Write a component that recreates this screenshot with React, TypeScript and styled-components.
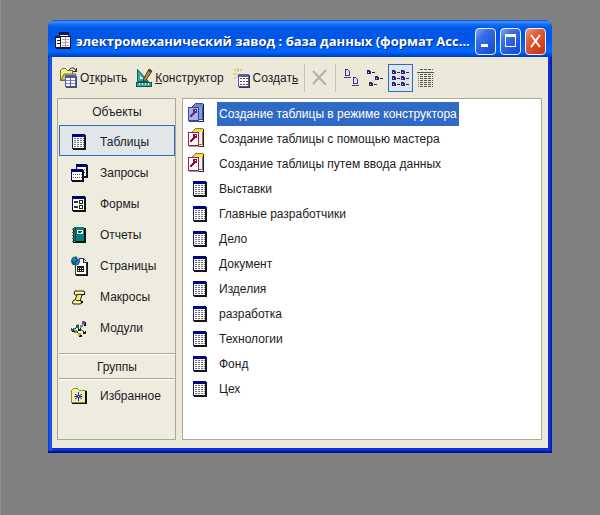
import React from "react";
import styled, { createGlobalStyle, css } from "styled-components";

const ui = `"Liberation Sans", Arial, sans-serif`;

const GlobalStyle = createGlobalStyle`
  * { box-sizing: border-box; }
  body { margin: 0; background: #808080; }
  button { font: inherit; color: inherit; cursor: default; }
  svg { display: block; flex: none; }
`;

const Desktop = styled.div`
  min-height: 100vh;
  display: flex;
  padding: 20px 48px 62px 47px;
  border-left: 1px solid #8c8f84;
  background: #808080;
  font: 12px/16px ${ui};
  color: #1c1c24;
`;

const Window = styled.main`
  flex: 1;
  min-width: 0;
  display: flex;
  flex-direction: column;
  border-radius: 8px 8px 0 0;
  background: linear-gradient(90deg, #0831d9 0, #1668f0 3px, #0831d9 4px, #0831d9 calc(100% - 2px), #001a90 100%);
  padding: 0 4px 5px;
  box-shadow: inset 0 -2px 0 #001690;
`;

const TitleBar = styled.header`
  height: 37px;
  margin: 0 -4px;
  padding: 5px 6px 0 7px;
  display: flex;
  align-items: center;
  border-radius: 8px 8px 0 0;
  background: linear-gradient(180deg, #0a4fd0 0, #3f94ff 2px, #1470f4 4px, #0058e6 8px, #0055e5 18px, #0064fa 26px, #0066ff 32px, #0050dc 34px, #003cc4 37px);
`;

const Title = styled.h1`
  flex: 1;
  min-width: 0;
  margin: 0 0 0 5px;
  font: 700 13px/20px "Open Sans", "Noto Sans", sans-serif;
  color: #fff;
  text-shadow: 1px 1px 1px #0a2a80;
  white-space: nowrap;
  overflow: hidden;
`;

const Controls = styled.div`
  display: flex;
  gap: 4px;
`;

const ControlButton = styled.button<{ $close?: boolean }>`
  width: 21px;
  height: 27px;
  padding: 0;
  display: flex;
  align-items: center;
  justify-content: center;
  border: 1px solid #e8f0ff;
  border-radius: 4px;
  background: ${p => p.$close
    ? "linear-gradient(135deg, #f0a080 0, #e2603c 30%, #d8421c 70%, #b83210 100%)"
    : "linear-gradient(135deg, #7fa8f8 0, #3a6ee8 30%, #2258dc 70%, #1848c4 100%)"};
`;

const Client = styled.div`
  flex: 1;
  display: flex;
  flex-direction: column;
  background: #ece9d8;
  padding: 0 6px 8px 5px;
`;

const Toolbar = styled.div`
  height: 41px;
  display: flex;
  align-items: center;
  padding-left: 3px;
`;

const ToolGroup = styled.div`
  display: flex;
  gap: 9px;
  margin-right: 3px;
`;

const ToolButton = styled.button`
  display: flex;
  align-items: center;
  gap: 2px;
  height: 28px;
  padding: 0;
  border: 0;
  background: none;
  white-space: nowrap;
`;

const IconButton = styled.button<{ $active?: boolean }>`
  display: flex;
  align-items: center;
  justify-content: center;
  width: 25px;
  height: 28px;
  padding: 0;
  border: 1px solid ${p => (p.$active ? "#316ac5" : "transparent")};
  background: ${p => (p.$active ? "#dde6ee" : "none")};
`;

const Separator = styled.span`
  width: 1px;
  height: 28px;
  background: #c5c2b2;
  margin: 0 2px 0 3px;
`;

const Panels = styled.div`
  flex: 1;
  display: grid;
  grid-template-columns: 119px minmax(0, 1fr);
  gap: 6px;
`;

const Sidebar = styled.nav`
  border: 1px solid #aca899;
  background: #eeecdf;
  display: flex;
  flex-direction: column;
`;

const SectionTitle = styled.h2<{ $ruled?: boolean }>`
  height: 26px;
  margin: 0 0 0 1px;
  font: inherit;
  line-height: 26px;
  text-align: center;
  ${p => p.$ruled && css`
    margin-top: 11px;
    line-height: 27px;
    border-top: 1px solid #aca899;
    border-bottom: 1px solid #aca899;
    box-shadow: 0 1px 0 #fff, inset 0 1px 0 #fff;
  `}
`;

const NavButton = styled.button<{ $active?: boolean }>`
  height: 31px;
  margin-left: 1px;
  padding: 3px 0 0 10px;
  display: grid;
  grid-template-columns: 18px 1fr;
  column-gap: 12px;
  align-items: center;
  text-align: left;
  border: 1px solid ${p => (p.$active ? "#316ac5" : "transparent")};
  background: ${p => (p.$active ? "#e1e6e8" : "none")};
  svg { justify-self: center; }
`;

const ObjectList = styled.ul`
  list-style: none;
  margin: 0;
  padding: 2px 4px;
  border: 1px solid #aca899;
  background: #fff;
`;

const ObjectRow = styled.li`
  height: 25px;
`;

const ObjectButton = styled.button<{ $selected?: boolean; $wizard?: boolean }>`
  height: 25px;
  padding: 0;
  display: grid;
  grid-template-columns: 20px auto;
  column-gap: 10px;
  align-items: center;
  border: 0;
  background: none;
  white-space: nowrap;
  svg { justify-self: ${p => (p.$wizard ? "start" : "end")}; }
  span {
    line-height: 24px;
    padding: 0 2px;
    color: ${p => (p.$selected ? "#fff" : "inherit")};
    background: ${p => (p.$selected ? "#316ac5" : "none")};
  }
`;

const Svg = ({ w, h, children }: { w: number; h: number; children: React.ReactNode }) => (
  <svg width={w} height={h} viewBox={`0 0 ${w} ${h}`} shapeRendering="crispEdges" aria-hidden="true">{children}</svg>
);

const TableIcon = () => (
  <Svg w={14} h={16}>
    <path d="M0 0H13V15H0Z" fill="#20206c" />
    <path d="M0 0H13V3H0Z" fill="#00008c" />
    <path d="M12 1H14V16H1V14H12Z" fill="#14141c" />
    <path d="M1 3H12V14H1Z" fill="#fff" />
    <path d="M2 4.500H12M2 6.500H12M2 8.500H12M2 10.500H12M2 12.500H12" stroke="#6c7078" strokeDasharray="2 1" />
  </Svg>
);

const QueryIcon = () => (
  <Svg w={17} h={18}>
    <path d="M5 0H16V13H5Z" fill="#00007c" />
    <path d="M6 3H15V12H6Z" fill="#fff" />
    <path d="M7 5.500H15M7 8.500H15" stroke="#555" strokeDasharray="1 1" />
    <path d="M15 1H17V14H6V13H15Z" fill="#111" />
    <path d="M0 5H12V17H0Z" fill="#00007c" />
    <path d="M1 8H11V16H1Z" fill="#fff" />
    <path d="M2 10.500H11M2 13.500H11" stroke="#555" strokeDasharray="1 1" />
    <path d="M11 6H13V18H1V16H11Z" fill="#111" />
  </Svg>
);

const FormIcon = () => (
  <Svg w={14} h={16}>
    <path d="M0 0H13V15H0Z" fill="#00006c" />
    <path d="M12 1H14V16H1V14H12Z" fill="#111" />
    <path d="M1 3H12V14H1Z" fill="#fff" />
    <path d="M2 5H6V7H2ZM2 10H6V12H2Z" fill="#333" />
    <path d="M7.500 4.500H10.500V7.500H7.500ZM7.500 9.500H10.500V12.500H7.500Z" fill="#fff" stroke="#222" />
  </Svg>
);

const ReportIcon = () => (
  <Svg w={14} h={17}>
    <path d="M1 1H14V16H1Z" fill="#111" />
    <path d="M2 0H12V14H2Z" fill="#068078" />
    <path d="M5 3H11V7H5Z" fill="#fff" />
    <path d="M6 4.500H10M6 5.500H9" stroke="#333" />
    <path d="M3.500 0V15" stroke="#024844" />
    <path d="M0 2H3V3H0ZM0 5H3V6H0ZM0 8H3V9H0ZM0 11H3V12H0ZM0 14H3V15H0Z" fill="#5c5c5c" />
    <path d="M12 1H14V16H2V15H12Z" fill="#111" />
  </Svg>
);

const PageIcon = () => (
  <Svg w={17} h={20}>
    <path d="M4.500 2.500H12.500L15.500 6.500V18.500H4.500Z" fill="#fff" stroke="#333" />
    <path d="M12.500 2.500V6.500H15.500" fill="#ddd" stroke="#333" />
    <path d="M16 6H17V20H5V19H16Z" fill="#111" />
    <path d="M6 10H13V16H6Z" fill="#222" />
    <path d="M7 12H8V13H7ZM9 12H10V13H9ZM11 12H12V13H11ZM7 14H8V15H7ZM9 14H10V15H9ZM11 14H12V15H11Z" fill="#fff" />
    <circle cx="4.500" cy="5" r="4.500" fill="#1550a8" shapeRendering="auto" />
    <path d="M1 3L4 1L5 4L3 6ZM5 6L8 4L7 8L5 9Z" fill="#1d9a5c" />
    <path d="M6 1H8V3H6Z" fill="#9fd0f0" />
  </Svg>
);

const MacroIcon = () => (
  <Svg w={14} h={15}>
    <path d="M3 1H12L13 3L11 5H10L8 11H10V13L8 14H1L0.500 12L2 10H3L5 5H3L2 3Z" fill="#f5ea78" stroke="#222" shapeRendering="auto" />
    <path d="M4 2.500H11M2 12.500H7" stroke="#fffbd0" />
    <path d="M5 4.500H11M4 10.500H9" stroke="#333" />
    <path d="M12 3H13V5H11ZM9 11H11V13H9Z" fill="#111" />
  </Svg>
);

const ModuleIcon = () => (
  <Svg w={16} h={17}>
    <path d="M2 10L6 7L9 9L13 3M6 7L7 4M9 9L14 12M6 12L9 15M9 9L6 12" stroke="#444c44" fill="none" shapeRendering="auto" />
    <path d="M0 8H3V11H0ZM5 5H8V8H5Z" fill="#36584c" />
    <path d="M11 1H14V4H11Z" fill="#8a3fa0" />
    <path d="M7 8H10V11H7ZM12 11H15V14H12Z" fill="#222" />
    <path d="M9 5H12V7H9ZM3 10H6V13H3Z" fill="#58a07c" />
    <path d="M7 13H10V16H7Z" fill="#b8a020" />
    <path d="M13 4H15V6H13ZM9 15H11V16H9ZM4 8H5V9H4ZM1 11H4V12H1ZM8 16H11V17H8ZM14 2H15V5H14Z" fill="#111" />
    <path d="M1 8H2V9H1ZM8 8H9V9H8ZM13 11H14V12H13Z" fill="#e8f0e8" />
  </Svg>
);

const FavoritesIcon = () => (
  <Svg w={16} h={16}>
    <path d="M0.500 14.500V2.500L2.500 0.500H6.500L8.500 2.500H14.500V14.500Z" fill="#f7f29a" stroke="#8c8a54" />
    <path d="M14 3H16V16H1V15H14Z" fill="#111" />
    <path d="M7.500 4V13M4 6L11 11M11 6L4 11M3.500 8.500H11.500" stroke="#1420d0" shapeRendering="auto" />
    <path d="M7 8H8V9H7Z" fill="#fff" />
  </Svg>
);

const WizardIcon = ({ selected }: { selected?: boolean }) => (
  <Svg w={18} h={21}>
    <path d="M5.500 3.500L8.500 0.500H15.500V16.500H5.500Z" fill={selected ? "#7f9fd8" : "#f4f2e4"} stroke={selected ? "#38509c" : "#77776c"} />
    <path d="M5 4L8 1H16V4H5Z" fill={selected ? "#7088b8" : "#f4e030"} />
    <path d="M16 1H17V19H12V18H16Z" fill={selected ? "#10205c" : "#222"} />
    <path d="M1.500 4.500H11.500V17.500H1.500Z" fill={selected ? "#9fb6e4" : "#fff"} stroke={selected ? "#503c94" : "#a01c50"} />
    <path d="M6 6H10V10H8V11H7V12H6V13H5V14H3V12H4V11H5V10H6Z" fill={selected ? "#5c2c88" : "#8c0c40"} />
    <path d="M8 7H9V8H8Z" fill="#fff" />
    <path d="M2 18.500H12" stroke={selected ? "#38509c" : "#999"} />
  </Svg>
);

const WindowIcon = () => (
  <Svg w={16} h={18}>
    <path d="M4.500 0.500H13.500V12.500H4.500Z" fill="#fff" stroke="#101430" />
    <path d="M4 0H14V3H4Z" fill="#101850" />
    <path d="M0.500 4.500H9.500V15.500H0.500Z" fill="#fff" stroke="#101430" />
    <path d="M0 4H10V6H0ZM2 8H5V9H2ZM2 11H5V12H2Z" fill="#101850" />
    <path d="M5.500 4.500H15.500V15.500H5.500Z" fill="#fff" stroke="#101430" />
    <path d="M7 7H14V8H7ZM7 10H14V11H7ZM7 13H14V14H7ZM10 5H11V15H10Z" fill="#b8a0a8" />
    <path d="M1 16H16V17H1Z" fill="#081030" />
  </Svg>
);

const OpenIcon = () => (
  <Svg w={18} h={21}>
    <path d="M0.500 13.500V3.500L2.500 1.500H5.500L7.500 3.500H12.500V13.500Z" fill="#f4ef90" stroke="#74702c" />
    <path d="M1 13L4 7H16L13 13Z" fill="#d8cf4c" stroke="#74702c" shapeRendering="auto" />
    <path d="M9 3L11 1H14L16 4M16.500 1V5M13 4.500H17" stroke="#333" fill="none" shapeRendering="auto" />
    <path d="M5 8H16V20H5Z" fill="#5058b8" />
    <path d="M6 11H10V19H6ZM11 11H15V19H11Z" fill="#fff" />
    <path d="M6 13.500H10M6 16.500H10M11 13.500H15M11 16.500H15" stroke="#8088c8" />
    <path d="M16 9H17V21H6V20H16Z" fill="#4a4c70" />
  </Svg>
);

const DesignIcon = () => (
  <Svg w={17} h={20}>
    <path d="M1.500 1.500V13.500H12.500Z" fill="#38a89c" stroke="#14605c" shapeRendering="auto" />
    <path d="M4 8V11H7Z" fill="#ece9d8" />
    <path d="M0.500 14.500H15.500V18.500H0.500Z" fill="#38a89c" stroke="#14504c" />
    <path d="M3.500 15V17M6.500 15V17M9.500 15V17M12.500 15V17" stroke="#c8f0e8" />
    <path d="M13 1L16 3L10 12L7 14L8 10Z" fill="#b09040" stroke="#443c28" shapeRendering="auto" />
    <path d="M13 1L16 3L15 5L12 3Z" fill="#5c4034" />
  </Svg>
);

const NewIcon = () => (
  <Svg w={18} h={20}>
    <path d="M5 0V4M0 6H3M1 1L3 3M9 1L7 3M1 11L3 9M5 7V10" stroke="#b8a850" shapeRendering="auto" />
    <path d="M4 2H6V4H4ZM2 5H4V6H2Z" fill="#ddd060" />
    <path d="M5 6H16V19H5Z" fill="#5660a0" />
    <path d="M6 9H15V18H6Z" fill="#fff" />
    <path d="M7 10.500H15M7 13.500H15M7 16.500H15" stroke="#555" strokeDasharray="2 1" />
    <path d="M16 7H17V20H6V19H16Z" fill="#33364c" />
  </Svg>
);

const DeleteIcon = () => (
  <Svg w={16} h={17}>
    <path d="M1 2L14 16M14 1L1 15" stroke="#b4b1a3" strokeWidth="2" shapeRendering="auto" />
  </Svg>
);

const LargeIconsIcon = () => (
  <Svg w={16} h={18}>
    {[[1, 0], [9, 8]].map(([x, y]) => (
      <g key={x} transform={`translate(${x} ${y})`}>
        <path d="M1.500 0.500H3.500L5.500 2.500V6.500H1.500Z" fill="#e8e4f8" stroke="#3c3090" />
        <path d="M0 8H7V9H0Z" fill="#44445c" />
      </g>
    ))}
  </Svg>
);

const Mini = ({ x, y }: { x: number; y: number }) => (
  <g transform={`translate(${x} ${y})`}>
    <path d="M0 0H3V1H4V4H0Z" fill="#302078" />
    <path d="M1 2H2V3H1Z" fill="#d0cce8" />
    <path d="M5 2H8V3H5Z" fill="#2c2c34" />
  </g>
);

const SmallIconsIcon = () => (
  <Svg w={17} h={18}><Mini x={0} y={1} /><Mini x={8} y={7} /><Mini x={2} y={13} /></Svg>
);

const ListIcon = () => (
  <Svg w={17} h={18}>
    {[1, 7, 13].map(y => <g key={y}><Mini x={0} y={y} /><Mini x={9} y={y} /></g>)}
  </Svg>
);

const DetailsIcon = () => (
  <Svg w={17} h={18}>
    <path d="M3 0.500H16" stroke="#555" strokeDasharray="3 1" />
    <path d="M0 3H17V4H0Z" fill="#555348" />
    <path d="M3 5.500H16M3 7.500H16M3 9.500H16M3 11.500H16M3 13.500H16M3 15.500H16M3 17.500H16" stroke="#555" strokeDasharray="3 1" />
    <path d="M1.500 5V18" stroke="#777568" strokeDasharray="1 1" />
  </Svg>
);

const MinimizeGlyph = () => <Svg w={13} h={18}><path d="M2 12H9V15H2Z" fill="#fff" /></Svg>;
const MaximizeGlyph = () => (
  <Svg w={13} h={18}><path d="M1 2H12V15H1ZM2 5V14H11V5Z" fill="#fff" fillRule="evenodd" /></Svg>
);
const CloseGlyph = () => (
  <Svg w={13} h={18}><path d="M2 3L11 15M11 3L2 15" stroke="#fff" strokeWidth="2" shapeRendering="auto" /></Svg>
);

const sections = [
  { name: "Таблицы", Icon: TableIcon },
  { name: "Запросы", Icon: QueryIcon },
  { name: "Формы", Icon: FormIcon },
  { name: "Отчеты", Icon: ReportIcon },
  { name: "Страницы", Icon: PageIcon },
  { name: "Макросы", Icon: MacroIcon },
  { name: "Модули", Icon: ModuleIcon },
];

const wizards = [
  "Создание таблицы в режиме конструктора",
  "Создание таблицы с помощью мастера",
  "Создание таблицы путем ввода данных",
];

const tables = ["Выставки", "Главные разработчики", "Дело", "Документ", "Изделия", "разработка", "Технологии", "Фонд", "Цех"];

export default function App() {
  return (
    <Desktop>
      <GlobalStyle />
      <Window>
        <TitleBar>
          <WindowIcon />
          <Title>электромеханический завод : база данных (формат Acc...</Title>
          <Controls>
            <ControlButton aria-label="Свернуть"><MinimizeGlyph /></ControlButton>
            <ControlButton aria-label="Развернуть"><MaximizeGlyph /></ControlButton>
            <ControlButton $close aria-label="Закрыть"><CloseGlyph /></ControlButton>
          </Controls>
        </TitleBar>
        <Client>
          <Toolbar role="toolbar">
            <ToolGroup>
              <ToolButton><OpenIcon /><span>О<u>т</u>крыть</span></ToolButton>
              <ToolButton><DesignIcon /><span><u>К</u>онструктор</span></ToolButton>
              <ToolButton><NewIcon /><span>Создат<u>ь</u></span></ToolButton>
            </ToolGroup>
            <Separator />
            <IconButton disabled aria-label="Удалить"><DeleteIcon /></IconButton>
            <Separator />
            <IconButton aria-label="Крупные значки"><LargeIconsIcon /></IconButton>
            <IconButton aria-label="Мелкие значки"><SmallIconsIcon /></IconButton>
            <IconButton $active aria-pressed="true" aria-label="Список"><ListIcon /></IconButton>
            <IconButton aria-label="Таблица"><DetailsIcon /></IconButton>
          </Toolbar>
          <Panels>
            <Sidebar>
              <SectionTitle>Объекты</SectionTitle>
              {sections.map(({ name, Icon }, i) => (
                <NavButton key={name} $active={i === 0}><Icon /><span>{name}</span></NavButton>
              ))}
              <SectionTitle $ruled>Группы</SectionTitle>
              <NavButton><FavoritesIcon /><span>Избранное</span></NavButton>
            </Sidebar>
            <ObjectList>
              {wizards.map((name, i) => (
                <ObjectRow key={name}>
                  <ObjectButton $wizard $selected={i === 0}><WizardIcon selected={i === 0} /><span>{name}</span></ObjectButton>
                </ObjectRow>
              ))}
              {tables.map(name => (
                <ObjectRow key={name}>
                  <ObjectButton><TableIcon /><span>{name}</span></ObjectButton>
                </ObjectRow>
              ))}
            </ObjectList>
          </Panels>
        </Client>
      </Window>
    </Desktop>
  );
}
